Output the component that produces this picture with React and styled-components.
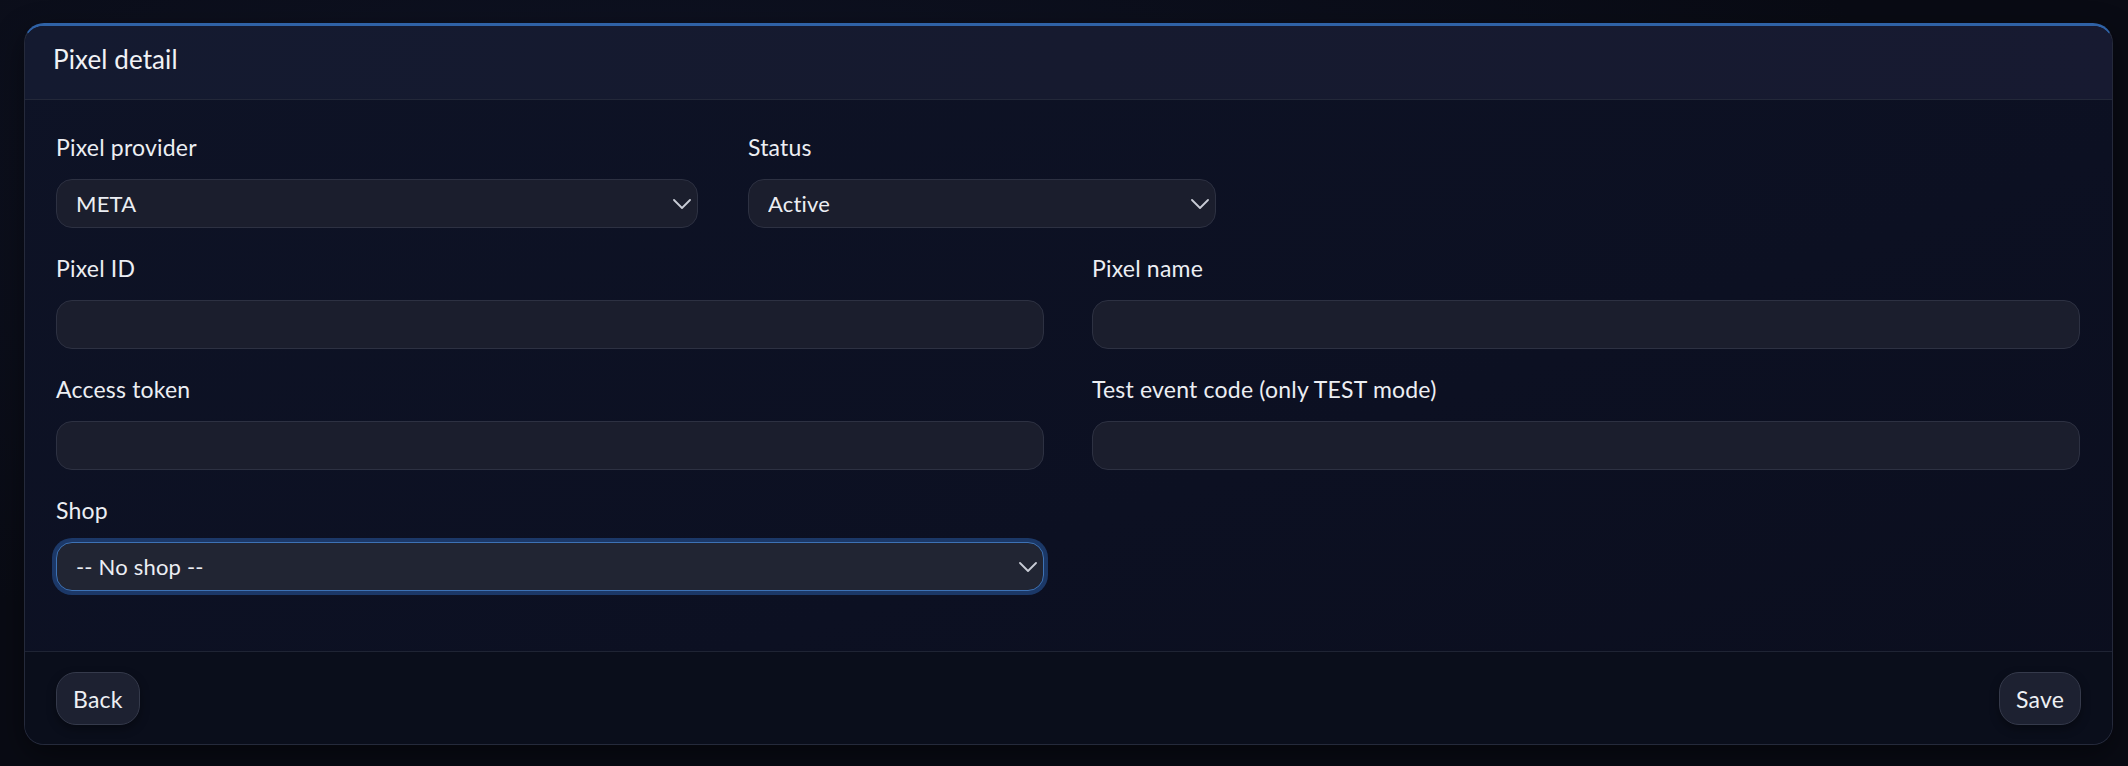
import React from 'react';
import styled, { createGlobalStyle } from 'styled-components';

const GlobalStyle = createGlobalStyle`
  html, body {
    margin: 0;
    padding: 0;
    background: #090b14;
  }
  body {
    font-family: Lato, "Noto Sans", "DejaVu Sans", sans-serif;
    color: #eceef3;
  }
`;

const Page = styled.div`
  min-height: 766px;
  box-sizing: border-box;
  padding: 23px 15px 20px 24px;
  background:
    radial-gradient(ellipse at 30% 20%, rgba(30, 40, 80, 0.25), transparent 60%),
    #090b14;
`;

const Card = styled.section`
  border: 1px solid #252a3b;
  border-top: 3px solid #2f62a6;
  border-radius: 20px;
  overflow: hidden;
  background: linear-gradient(160deg, #0e1326 0%, #0c1022 60%, #0b0e1e 100%);
  box-shadow: 0 10px 30px rgba(0, 0, 0, 0.45);
`;

const Header = styled.header`
  height: 73px;
  display: flex;
  align-items: center;
  padding: 0 28px;
  border-bottom: 1px solid #232839;
  background: linear-gradient(100deg, #141a30 0%, #161a2f 50%, #171a31 100%);
`;

const Title = styled.h1`
  margin: 0 0 7px;
  font-size: 26px;
  font-weight: 400;
  letter-spacing: 0.1px;
  color: #f1f2f6;
`;

const Body = styled.div`
  padding: 32px 32px 60px 31px;
  display: flex;
  flex-direction: column;
  gap: 25px;
`;

const Row = styled.div`
  display: grid;
  grid-template-columns: ${(p) => p.$cols || '1fr 1fr'};
  column-gap: ${(p) => p.$gap || '48px'};
`;

const Field = styled.div`
  display: flex;
  flex-direction: column;
  min-width: 0;
`;

const Label = styled.label`
  font-size: 23px;
  line-height: 30px;
  letter-spacing: 0.2px;
  margin-bottom: 17px;
  color: #eceef3;
`;

const Input = styled.input`
  box-sizing: border-box;
  height: 49px;
  width: 100%;
  padding: 0 19px;
  border-radius: 16px;
  border: 1px solid #2d3142;
  background: #1b1e2d;
  color: #eceef3;
  font-family: inherit;
  font-size: 22px;
  outline: none;
`;

const SelectWrap = styled.div`
  position: relative;
  width: 100%;
`;

const Select = styled.select`
  appearance: none;
  -webkit-appearance: none;
  box-sizing: border-box;
  height: 49px;
  width: 100%;
  padding: 0 40px 0 19px;
  border-radius: 16px;
  border: 1px solid ${(p) => (p.$focused ? '#3d72b5' : '#2d3142')};
  background: ${(p) => (p.$focused ? '#212533' : '#1b1e2d')};
  box-shadow: ${(p) => (p.$focused ? '0 0 0 4px rgba(38, 84, 150, 0.6)' : 'none')};
  color: #eceef3;
  font-family: inherit;
  font-size: 22px;
  letter-spacing: 0.2px;
  outline: none;
`;

const Chevron = styled.svg`
  position: absolute;
  right: 7px;
  top: 50%;
  width: 18px;
  height: 10px;
  margin-top: -5px;
  pointer-events: none;
`;

const Footer = styled.footer`
  display: flex;
  justify-content: space-between;
  align-items: center;
  padding: 20px 31px 19px 31px;
  border-top: 1px solid #1f2434;
  background: #0a0e1b;
`;

const Button = styled.button`
  height: 53px;
  padding: 0 16px;
  border-radius: 20px;
  border: 1px solid #353a4b;
  background: #1d2131;
  color: #eef0f4;
  font-family: inherit;
  font-size: 23px;
  letter-spacing: 0.2px;
  box-shadow: 0 4px 10px rgba(0, 0, 0, 0.35);
  cursor: pointer;
`;

function SelectField({ label, value, options, focused }) {
  return (
    <Field>
      <Label>{label}</Label>
      <SelectWrap>
        <Select defaultValue={value} $focused={focused}>
          {options.map((o) => (
            <option key={o}>{o}</option>
          ))}
        </Select>
        <Chevron viewBox="0 0 18 10" fill="none">
          <path d="M1 1l8 8 8-8" stroke="#c9ccd6" strokeWidth="1.8" strokeLinecap="round" strokeLinejoin="round" />
        </Chevron>
      </SelectWrap>
    </Field>
  );
}

function TextField({ label }) {
  return (
    <Field>
      <Label>{label}</Label>
      <Input type="text" />
    </Field>
  );
}

export default function App() {
  return (
    <>
      <GlobalStyle />
      <Page>
        <Card>
          <Header>
            <Title>Pixel detail</Title>
          </Header>
          <Body>
            <Row $cols="642px 468px" $gap="50px">
              <SelectField label="Pixel provider" value="META" options={['META', 'GOOGLE', 'TIKTOK']} />
              <SelectField label="Status" value="Active" options={['Active', 'Inactive', 'Test']} />
            </Row>
            <Row>
              <TextField label="Pixel ID" />
              <TextField label="Pixel name" />
            </Row>
            <Row>
              <TextField label="Access token" />
              <TextField label="Test event code (only TEST mode)" />
            </Row>
            <Row>
              <SelectField label="Shop" value="-- No shop --" options={['-- No shop --']} focused />
              <div />
            </Row>
          </Body>
          <Footer>
            <Button>Back</Button>
            <Button>Save</Button>
          </Footer>
        </Card>
      </Page>
    </>
  );
}
